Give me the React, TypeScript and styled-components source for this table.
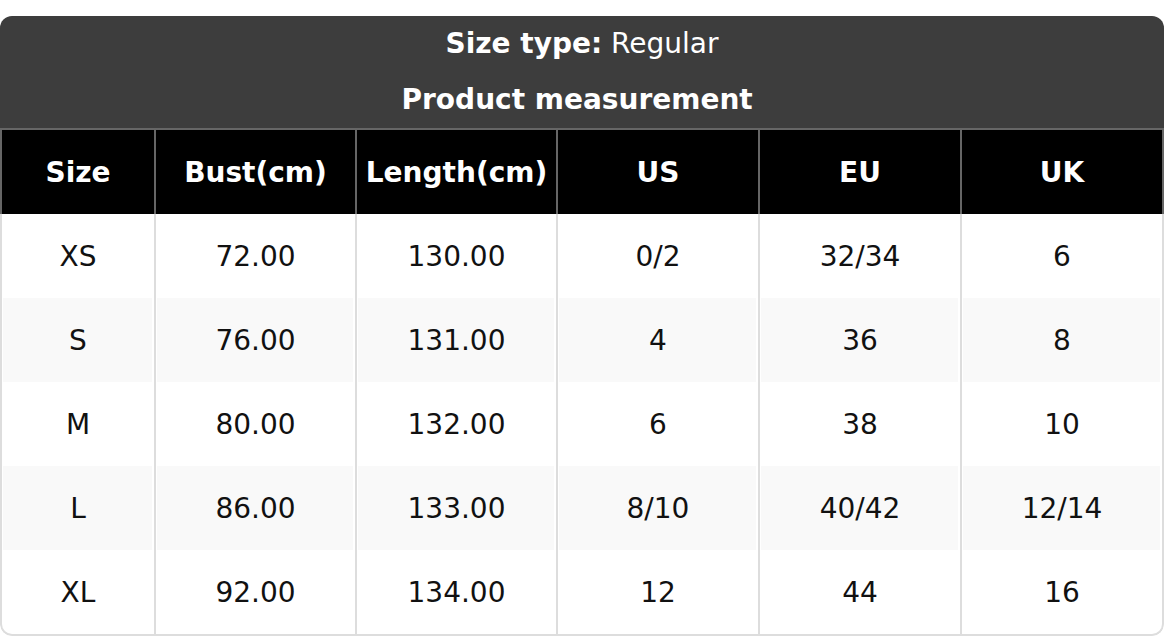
import styled, { createGlobalStyle } from 'styled-components';

const GlobalStyle = createGlobalStyle`
  html, body {
    margin: 0;
    padding: 0;
    background: #fff;
  }
  body {
    font-family: "DejaVu Sans", "Noto Sans", sans-serif;
  }
`;

interface SizeRow {
  size: string;
  bust: string;
  length: string;
  us: string;
  eu: string;
  uk: string;
}

const columns = ['Size', 'Bust(cm)', 'Length(cm)', 'US', 'EU', 'UK'];
const widths = [154, 201, 201, 202, 202, 204];

const rows: SizeRow[] = [
  { size: 'XS', bust: '72.00', length: '130.00', us: '0/2', eu: '32/34', uk: '6' },
  { size: 'S', bust: '76.00', length: '131.00', us: '4', eu: '36', uk: '8' },
  { size: 'M', bust: '80.00', length: '132.00', us: '6', eu: '38', uk: '10' },
  { size: 'L', bust: '86.00', length: '133.00', us: '8/10', eu: '40/42', uk: '12/14' },
  { size: 'XL', bust: '92.00', length: '134.00', us: '12', eu: '44', uk: '16' },
];

export default function App() {
  return (
    <>
      <GlobalStyle />
      <Page>
        <Chart>
          <Title>
            <TitleLine>
              <strong>Size type:</strong> Regular
            </TitleLine>
            <TitleLine>
              <strong>Product measurement&nbsp;</strong>
            </TitleLine>
          </Title>
          <Table>
            <colgroup>
              {widths.map((w, i) => (
                <col key={i} style={{ width: w }} />
              ))}
            </colgroup>
            <thead>
              <tr>
                {columns.map((c) => (
                  <HeadCell key={c}>{c}</HeadCell>
                ))}
              </tr>
            </thead>
            <tbody>
              {rows.map((r, i) => (
                <BodyRow key={r.size} $striped={i % 2 === 1}>
                  <td>{r.size}</td>
                  <td>{r.bust}</td>
                  <td>{r.length}</td>
                  <td>{r.us}</td>
                  <td>{r.eu}</td>
                  <td>{r.uk}</td>
                </BodyRow>
              ))}
            </tbody>
          </Table>
        </Chart>
      </Page>
    </>
  );
}

const Page = styled.div`
  padding-top: 16px;
  width: 1164px;
`;

const Chart = styled.div`
  border-radius: 12px;
  overflow: hidden;
  background: #fff;
`;

const Title = styled.div`
  background: #3d3d3d;
  color: #fff;
  text-align: center;
`;

const TitleLine = styled.div`
  height: 56px;
  line-height: 56px;
  font-size: 28px;
  strong {
    font-weight: bold;
  }
`;

const Table = styled.table`
  width: 1164px;
  table-layout: fixed;
  border-collapse: separate;
  border-spacing: 0;
  font-size: 28px;
  text-align: center;
`;

const HeadCell = styled.th`
  height: 84px;
  padding: 0;
  background: #000;
  color: #fff;
  font-weight: bold;
  border-top: 2px solid #666;
  border-left: 2px solid #666;
  &:last-child {
    border-right: 2px solid #666;
  }
`;

const BodyRow = styled.tr<{ $striped: boolean }>`
  td {
    height: 84px;
    padding: 0;
    color: #111;
    background: ${(p) => (p.$striped ? '#f9f9f9' : '#fff')};
    box-shadow: ${(p) => (p.$striped ? 'inset 1px 0 #fff, inset -2px 0 #fff' : 'none')};
    border-left: 2px solid #ddd;
  }
  td:last-child {
    border-right: 2px solid #ddd;
  }
  &:last-child td {
    border-bottom: 2px solid #ddd;
  }
  &:last-child td:first-child {
    border-bottom-left-radius: 12px;
  }
  &:last-child td:last-child {
    border-bottom-right-radius: 12px;
  }
`;
